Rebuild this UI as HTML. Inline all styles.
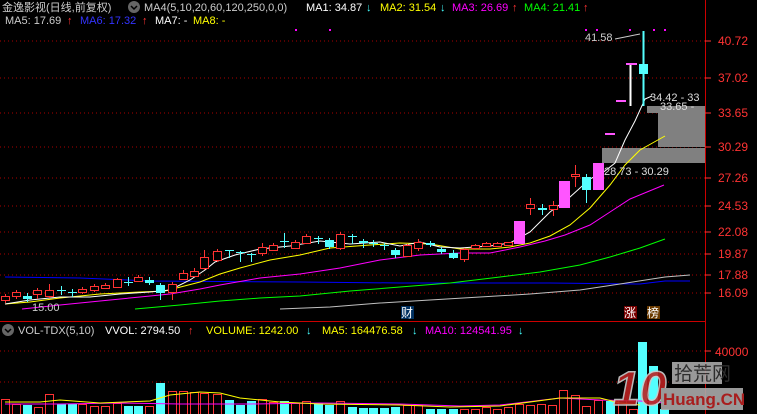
<!DOCTYPE html>
<html><head><meta charset="utf-8"><style>
html,body{margin:0;padding:0;background:#000;width:757px;height:414px;overflow:hidden}
svg{display:block}
text{font-family:"Liberation Sans","Noto Sans CJK SC",sans-serif;font-size:11px}
.r{fill:#000;stroke:#ff3333}
.c{fill:#54ffff}
.m{fill:#ff55ff}
.w{fill:#fff}
.lr{stroke:#ff3333}.lc{stroke:#54ffff}.lm{stroke:#ff55ff}.lw{stroke:#fff}
</style></head><body>
<svg width="757" height="414" xmlns="http://www.w3.org/2000/svg">
<rect width="757" height="414" fill="#000"/>
<g stroke="#a00" stroke-width="1" stroke-dasharray="1,3">
<line x1="0" y1="41" x2="705" y2="41"/><line x1="0" y1="78" x2="705" y2="78"/>
<line x1="0" y1="113" x2="705" y2="113"/><line x1="0" y1="147" x2="705" y2="147"/>
<line x1="0" y1="178" x2="705" y2="178"/><line x1="0" y1="206" x2="705" y2="206"/>
<line x1="0" y1="232" x2="705" y2="232"/><line x1="0" y1="254" x2="705" y2="254"/>
<line x1="0" y1="275" x2="705" y2="275"/><line x1="0" y1="293" x2="705" y2="293"/>
<line x1="0" y1="351" x2="705" y2="351"/><line x1="0" y1="382" x2="705" y2="382"/>
</g>
<line x1="705.5" y1="0" x2="705.5" y2="414" stroke="#c00"/>
<line x1="0" y1="321.5" x2="705" y2="321.5" stroke="#c00"/>
<g>
<text x="718" y="45" style="font-size:12px" fill="#f33">40.72</text>
<text x="718" y="82" style="font-size:12px" fill="#f33">37.02</text>
<text x="718" y="117" style="font-size:12px" fill="#f33">33.65</text>
<text x="718" y="151" style="font-size:12px" fill="#f33">30.29</text>
<text x="718" y="182" style="font-size:12px" fill="#f33">27.26</text>
<text x="718" y="210" style="font-size:12px" fill="#f33">24.53</text>
<text x="718" y="236" style="font-size:12px" fill="#f33">22.08</text>
<text x="718" y="258" style="font-size:12px" fill="#f33">19.87</text>
<text x="718" y="279" style="font-size:12px" fill="#f33">17.88</text>
<text x="718" y="297" style="font-size:12px" fill="#f33">16.09</text>
<text x="715" y="356" style="font-size:12px" fill="#f33">40000</text>
</g>
<g stroke="#f33"><line x1="705" y1="41" x2="711" y2="41"/><line x1="705" y1="78" x2="711" y2="78"/><line x1="705" y1="113" x2="711" y2="113"/><line x1="705" y1="147" x2="711" y2="147"/><line x1="705" y1="178" x2="711" y2="178"/><line x1="705" y1="206" x2="711" y2="206"/><line x1="705" y1="232" x2="711" y2="232"/><line x1="705" y1="254" x2="711" y2="254"/><line x1="705" y1="275" x2="711" y2="275"/><line x1="705" y1="293" x2="711" y2="293"/><line x1="705" y1="351" x2="711" y2="351"/><line x1="705" y1="382" x2="711" y2="382"/></g>
<rect x="602" y="148" width="103" height="15" fill="#808080"/>
<rect x="658" y="113" width="47" height="34" fill="#808080"/>
<rect x="647" y="106" width="58" height="7" fill="#808080"/>
<g fill="none" stroke-width="1">
<polyline stroke="#0000ff" points="5,277 80,278 150,281 300,282 400,283 550,283 640,284 665,281 690,281"/>
<polyline stroke="#c0c0c0" points="280,309 330,307 380,303 430,300 480,297 530,294 580,290 620,284 665,277 690,275"/>
<polyline stroke="#00ff00" points="135,309 180,305 220,301 260,298 300,296 350,291 400,287 450,283 500,277 540,272 580,265 610,257 640,248 665,239"/>
<polyline stroke="#ff00ff" points="22,309 60,305 100,301 140,297 170,294 200,289 220,285 260,278 300,274 340,268 380,260 420,255 460,253 490,253 520,247 545,241 565,235 590,225 610,212 630,199 664,185"/>
<polyline stroke="#ffff00" points="5,304 30,302 60,298 100,294 140,292 165,291 200,282 220,274 240,268 270,260 300,255 330,248 370,245 400,243 430,244 460,249 490,249 510,247 530,243 550,236 570,225 590,208 610,185 625,165 640,150 665,136"/>
<polyline stroke="#ffffff" points="5,304 30,300 60,297 90,297 120,294 150,292 170,290 190,280 205,270 215,262 235,255 260,249 290,246 320,241 350,244 380,242 400,246 420,242 440,247 460,248 490,246 510,243 530,232 550,212 570,197 590,179 605,171 615,163 625,140 635,121 645,99 652,96"/>
</g>
<!-- candles -->
<g stroke-width="1">
<line class="lr" x1="5.5" y1="294" x2="5.5" y2="303"/><rect class="r" x="1.5" y="296.5" width="8" height="4"/>
<line class="lr" x1="16.5" y1="290" x2="16.5" y2="299"/><rect class="r" x="12.5" y="292.5" width="8" height="4"/>
<line class="lc" x1="27.5" y1="293" x2="27.5" y2="302"/><rect class="c" x="23" y="296" width="9" height="3"/>
<line class="lr" x1="37.5" y1="288" x2="37.5" y2="299"/><rect class="r" x="33.5" y="290.5" width="8" height="4"/>
<line class="lr" x1="49.5" y1="284" x2="49.5" y2="298"/><rect class="r" x="45.5" y="290.5" width="8" height="6"/>
<line class="lc" x1="61.5" y1="286" x2="61.5" y2="295"/><rect class="c" x="57" y="290" width="9" height="1"/>
<line class="lc" x1="72.5" y1="289" x2="72.5" y2="297"/><rect class="c" x="68" y="292" width="9" height="1"/>
<line class="lr" x1="82.5" y1="287" x2="82.5" y2="294"/><rect class="r" x="78.5" y="289.5" width="8" height="3"/>
<line class="lr" x1="94.5" y1="284" x2="94.5" y2="292"/><rect class="r" x="90.5" y="286.5" width="8" height="4"/>
<line class="lr" x1="105.5" y1="283" x2="105.5" y2="289"/><rect class="r" x="101.5" y="285.5" width="8" height="3"/>
<line class="lr" x1="117.5" y1="278" x2="117.5" y2="288"/><rect class="r" x="113.5" y="279.5" width="8" height="8"/>
<line class="lc" x1="128.5" y1="277" x2="128.5" y2="286"/><rect class="c" x="124" y="282" width="9" height="1"/>
<line class="lr" x1="138.5" y1="275" x2="138.5" y2="282"/><rect class="r" x="134.5" y="277.5" width="8" height="4"/>
<line class="lc" x1="149.5" y1="277" x2="149.5" y2="285"/><rect class="c" x="145" y="280" width="9" height="3"/>
<line class="lc" x1="160.5" y1="283" x2="160.5" y2="300"/><rect class="c" x="156" y="285" width="9" height="8"/>
<line class="lr" x1="172.5" y1="282" x2="172.5" y2="300"/><rect class="r" x="168.5" y="284.5" width="8" height="8"/>
<line class="lr" x1="183.5" y1="270" x2="183.5" y2="280"/><rect class="r" x="179.5" y="273.5" width="8" height="6"/>
<line class="lr" x1="194.5" y1="268" x2="194.5" y2="277"/><rect class="r" x="190.5" y="271.5" width="8" height="5"/>
<line class="lr" x1="204.5" y1="250" x2="204.5" y2="270"/><rect class="r" x="200.5" y="257.5" width="8" height="11"/>
<line class="lr" x1="217.5" y1="249" x2="217.5" y2="262"/><rect class="r" x="213.5" y="251.5" width="8" height="9"/>
<line class="lc" x1="229.5" y1="250" x2="229.5" y2="258"/><rect class="c" x="225" y="250" width="9" height="1"/>
<line class="lc" x1="240.5" y1="251" x2="240.5" y2="262"/><rect class="c" x="236" y="252" width="9" height="1"/>
<line class="lc" x1="251.5" y1="253" x2="251.5" y2="262"/><rect class="c" x="247" y="254" width="9" height="1"/>
<line class="lr" x1="262.5" y1="243" x2="262.5" y2="256"/><rect class="r" x="258.5" y="247.5" width="8" height="6"/>
<line class="lr" x1="273.5" y1="243" x2="273.5" y2="251"/><rect class="r" x="269.5" y="245.5" width="8" height="5"/>
<line class="lc" x1="284.5" y1="233" x2="284.5" y2="248"/><rect class="c" x="280" y="241" width="9" height="1"/>
<line class="lr" x1="295.5" y1="240" x2="295.5" y2="249"/><rect class="r" x="291.5" y="242.5" width="8" height="6"/>
<line class="lr" x1="306.5" y1="234" x2="306.5" y2="244"/><rect class="r" x="302.5" y="236.5" width="8" height="7"/>
<line class="lc" x1="318.5" y1="236" x2="318.5" y2="244"/><rect class="c" x="314" y="238" width="9" height="1"/>
<line class="lc" x1="329.5" y1="238" x2="329.5" y2="249"/><rect class="c" x="325" y="240" width="9" height="7"/>
<line class="lr" x1="340.5" y1="232" x2="340.5" y2="250"/><rect class="r" x="336.5" y="234.5" width="8" height="14"/>
<line class="lc" x1="352.5" y1="234" x2="352.5" y2="244"/><rect class="c" x="348" y="236" width="9" height="1"/>
<line class="lc" x1="363.5" y1="239" x2="363.5" y2="248"/><rect class="c" x="359" y="241" width="9" height="2"/>
<line class="lc" x1="373.5" y1="240" x2="373.5" y2="247"/><rect class="c" x="369" y="243" width="9" height="1"/>
<line class="lc" x1="384.5" y1="243" x2="384.5" y2="250"/><rect class="c" x="380" y="245" width="9" height="1"/>
<line class="lc" x1="395.5" y1="248" x2="395.5" y2="258"/><rect class="c" x="391" y="250" width="9" height="5"/>
<line class="lr" x1="407.5" y1="244" x2="407.5" y2="257"/><rect class="r" x="403.5" y="245.5" width="8" height="11"/>
<line class="lr" x1="418.5" y1="239" x2="418.5" y2="251"/><rect class="r" x="414.5" y="242.5" width="8" height="6"/>
<line class="lc" x1="430.5" y1="241" x2="430.5" y2="247"/><rect class="c" x="426" y="243" width="9" height="2"/>
<line class="lc" x1="441.5" y1="247" x2="441.5" y2="254"/><rect class="c" x="437" y="249" width="9" height="3"/>
<line class="lc" x1="453.5" y1="250" x2="453.5" y2="259"/><rect class="c" x="449" y="253" width="9" height="5"/>
<line class="lr" x1="464.5" y1="248" x2="464.5" y2="262"/><rect class="r" x="460.5" y="249.5" width="8" height="10"/>
<line class="lr" x1="475.5" y1="244" x2="475.5" y2="249"/><rect class="r" x="471.5" y="245.5" width="8" height="3"/>
<line class="lr" x1="486.5" y1="242" x2="486.5" y2="247"/><rect class="r" x="482.5" y="243.5" width="8" height="3"/>
<line class="lr" x1="497.5" y1="242" x2="497.5" y2="247"/><rect class="r" x="493.5" y="243.5" width="8" height="3"/>
<line class="lr" x1="508.5" y1="242" x2="508.5" y2="246"/><rect class="r" x="504.5" y="242.5" width="8" height="3"/>
<rect class="m" x="514" y="221" width="11" height="23"/>
<line class="lr" x1="530.5" y1="198" x2="530.5" y2="215"/><rect class="r" x="526.5" y="204.5" width="8" height="4"/>
<line class="lc" x1="542.5" y1="204" x2="542.5" y2="215"/><rect class="c" x="538" y="208" width="9" height="2"/>
<line class="lr" x1="553.5" y1="201" x2="553.5" y2="216"/><rect class="r" x="549.5" y="205.5" width="8" height="4"/>
<rect class="m" x="559" y="181" width="11" height="27"/>
<line class="lr" x1="575.5" y1="165" x2="575.5" y2="187"/><rect class="r" x="571.5" y="174.5" width="8" height="2"/>
<line class="lc" x1="586.5" y1="174" x2="586.5" y2="203"/><rect class="c" x="582" y="177" width="9" height="13"/>
<rect class="m" x="593" y="163" width="11" height="27"/>
<rect class="m" x="605" y="133" width="10" height="2"/>
<rect class="m" x="616" y="100" width="10" height="2"/>
<line class="lw" x1="630.5" y1="64" x2="630.5" y2="106" stroke-width="2"/><rect class="m" x="626" y="63" width="11" height="2"/>
<line class="lc" x1="643.5" y1="31" x2="643.5" y2="106" stroke-width="2"/><rect class="c" x="639" y="64" width="9" height="10"/>
</g>
<!-- volume -->
<g>
<rect class="r" x="1.5" y="399.5" width="8" height="16"/>
<rect class="r" x="12.5" y="404.5" width="8" height="11"/>
<rect class="c" x="23" y="405" width="9" height="9"/>
<rect class="r" x="34.5" y="407.5" width="8" height="8"/>
<rect class="r" x="45.5" y="394.5" width="8" height="21"/>
<rect class="c" x="57" y="404" width="9" height="10"/>
<rect class="c" x="68" y="404" width="9" height="10"/>
<rect class="r" x="78.5" y="404.5" width="8" height="11"/>
<rect class="r" x="90.5" y="406.5" width="8" height="9"/>
<rect class="r" x="101.5" y="406.5" width="8" height="9"/>
<rect class="r" x="113.5" y="403.5" width="8" height="12"/>
<rect class="c" x="124" y="406" width="9" height="8"/>
<rect class="c" x="134" y="406" width="9" height="8"/>
<rect class="r" x="145.5" y="406.5" width="8" height="9"/>
<rect class="c" x="156" y="383" width="9" height="31"/>
<rect class="r" x="168.5" y="391.5" width="8" height="24"/>
<rect class="r" x="179.5" y="391.5" width="8" height="24"/>
<rect class="r" x="190.5" y="392.5" width="8" height="23"/>
<rect class="r" x="200.5" y="393.5" width="8" height="22"/>
<rect class="r" x="213.5" y="394.5" width="8" height="21"/>
<rect class="c" x="225" y="400" width="9" height="14"/>
<rect class="c" x="236" y="405" width="9" height="9"/>
<rect class="c" x="247" y="401" width="9" height="13"/>
<rect class="r" x="258.5" y="399.5" width="8" height="16"/>
<rect class="r" x="269.5" y="402.5" width="8" height="13"/>
<rect class="c" x="280" y="401" width="9" height="13"/>
<rect class="r" x="291.5" y="403.5" width="8" height="12"/>
<rect class="r" x="302.5" y="401.5" width="8" height="14"/>
<rect class="c" x="314" y="403" width="9" height="11"/>
<rect class="c" x="325" y="405" width="9" height="9"/>
<rect class="r" x="336.5" y="401.5" width="8" height="14"/>
<rect class="c" x="348" y="407" width="9" height="7"/>
<rect class="c" x="359" y="408" width="9" height="6"/>
<rect class="c" x="369" y="408" width="9" height="6"/>
<rect class="c" x="380" y="408" width="9" height="6"/>
<rect class="c" x="391" y="407" width="9" height="7"/>
<rect class="r" x="403.5" y="405.5" width="8" height="10"/>
<rect class="r" x="414.5" y="405.5" width="8" height="10"/>
<rect class="c" x="426" y="409" width="9" height="5"/>
<rect class="c" x="437" y="409" width="9" height="5"/>
<rect class="c" x="449" y="409" width="9" height="5"/>
<rect class="r" x="460.5" y="409.5" width="8" height="6"/>
<rect class="r" x="471.5" y="409.5" width="8" height="6"/>
<rect class="r" x="482.5" y="407.5" width="8" height="8"/>
<rect class="r" x="493.5" y="409.5" width="8" height="6"/>
<rect class="r" x="504.5" y="407.5" width="8" height="8"/>
<rect class="r" x="515.5" y="404.5" width="8" height="11"/>
<rect class="r" x="526.5" y="405.5" width="8" height="10"/>
<rect class="r" x="537.5" y="404.5" width="8" height="11"/>
<rect class="r" x="548.5" y="405.5" width="8" height="10"/>
<rect class="r" x="559.5" y="390.5" width="8" height="25"/>
<rect class="r" x="571.5" y="395.5" width="8" height="20"/>
<rect class="r" x="582.5" y="406.5" width="8" height="9"/>
<rect class="r" x="594.5" y="400.5" width="8" height="15"/>
<rect class="c" x="606" y="401" width="9" height="13"/>
<rect class="r" x="618.5" y="400.5" width="8" height="15"/>
<rect class="r" x="629.5" y="409.5" width="8" height="6"/>
<rect class="c" x="638" y="342" width="9" height="72"/>
<rect class="c" x="649" y="366" width="9" height="48"/>
<rect class="c" x="660" y="409" width="9" height="5"/>
</g>
<g stroke="#ff00ff" fill="none"><polyline points="5,404 60,404 120,403 180,404 250,404 320,403 400,404 460,406 500,405 560,398 600,400 640,401 665,403"/></g>
<g stroke="#ffff00" fill="none"><polyline points="5,402 40,402 60,400 100,403 150,401 170,395 200,392 220,393 240,398 280,402 320,404 400,405 450,407 500,406 560,398 600,398 620,403 640,405"/></g>
<text x="585" y="41" fill="#ccc">41.58</text>
<polyline points="615,39 630,36 640,34" stroke="#ccc" fill="none"/>
<text x="650" y="101" fill="#ddd">34.42 - 33</text>
<text x="660" y="110" fill="#ddd">33.65 -</text>
<text x="604" y="175" fill="#ddd">28.73 - 30.29</text>
<text x="32" y="311" fill="#ccc">15.00</text>
<rect x="401" y="306" width="13" height="13" fill="#003060"/><text x="401" y="317" fill="#fff" style="font-size:12px">财</text>
<rect x="624" y="306" width="13" height="13" fill="#700"/><text x="624" y="317" fill="#fff" style="font-size:12px">涨</text>
<rect x="647" y="306" width="13" height="13" fill="#6a3a00"/><text x="647" y="317" fill="#fff" style="font-size:12px">榜</text>
<g fill="#ff00ff"><rect x="585" y="29" width="2" height="2"/><rect x="596" y="29" width="2" height="2"/><rect x="629" y="29" width="2" height="2"/><rect x="653" y="29" width="2" height="2"/><rect x="664" y="29" width="2" height="2"/><rect x="295" y="29" width="2" height="2"/><rect x="329" y="29" width="2" height="2"/></g>
<text x="2" y="11" fill="#ccc">金逸影视(日线,前复权)</text>
<circle cx="134" cy="7" r="6" fill="#666"/><polyline points="131,6 134,9 137,6" stroke="#000" fill="none" stroke-width="1.5"/>
<text x="144" y="11" fill="#ccc">MA4(5,10,20,60,120,250,0,0)</text>
<text x="306" y="11" fill="#fff">MA1: 34.87</text><text x="366" y="11" fill="#4ff">↓</text>
<text x="380" y="11" fill="#ff0">MA2: 31.54</text><text x="440" y="11" fill="#4ff">↓</text>
<text x="452" y="11" fill="#f0f">MA3: 26.69</text><text x="512" y="11" fill="#f33">↑</text>
<text x="524" y="11" fill="#0f0">MA4: 21.41</text><text x="583" y="11" fill="#f33">↑</text>
<text x="5" y="24" fill="#ccc">MA5: 17.69</text><text x="67" y="24" fill="#f33">↑</text>
<text x="80" y="24" fill="#33f">MA6: 17.32</text><text x="142" y="24" fill="#f33">↑</text>
<text x="155" y="24" fill="#fff">MA7: -</text>
<text x="193" y="24" fill="#ff0">MA8: -</text>
<circle cx="8" cy="330" r="6" fill="#666"/><polyline points="5,329 8,332 11,329" stroke="#000" fill="none" stroke-width="1.5"/>
<text x="18" y="334" fill="#ccc">VOL-TDX(5,10)</text>
<text x="105" y="334" fill="#fff">VVOL: 2794.50</text><text x="188" y="334" fill="#f33">↑</text>
<text x="206" y="334" fill="#ff0">VOLUME: 1242.00</text><text x="306" y="334" fill="#4ff">↓</text>
<text x="322" y="334" fill="#ff0">MA5: 164476.58</text><text x="412" y="334" fill="#4ff">↓</text>
<text x="425" y="334" fill="#f0f">MA10: 124541.95</text><text x="518" y="334" fill="#4ff">↓</text>
<g opacity="0.9">
<text x="613" y="405" fill="#b22" stroke="#ccc" stroke-width="1.5" style="font-size:48px;font-weight:bold;font-style:italic">10</text>
<rect x="672" y="362" width="50" height="22" fill="#aaa"/>
<text x="674" y="380" fill="#333" style="font-size:19px">拾荒网</text>
<rect x="661" y="388" width="82" height="22" fill="#aaa"/>
<text x="663" y="405" fill="#b22" style="font-size:17px;font-weight:bold">Huang.CN</text>
</g>
</svg>
</body></html>
